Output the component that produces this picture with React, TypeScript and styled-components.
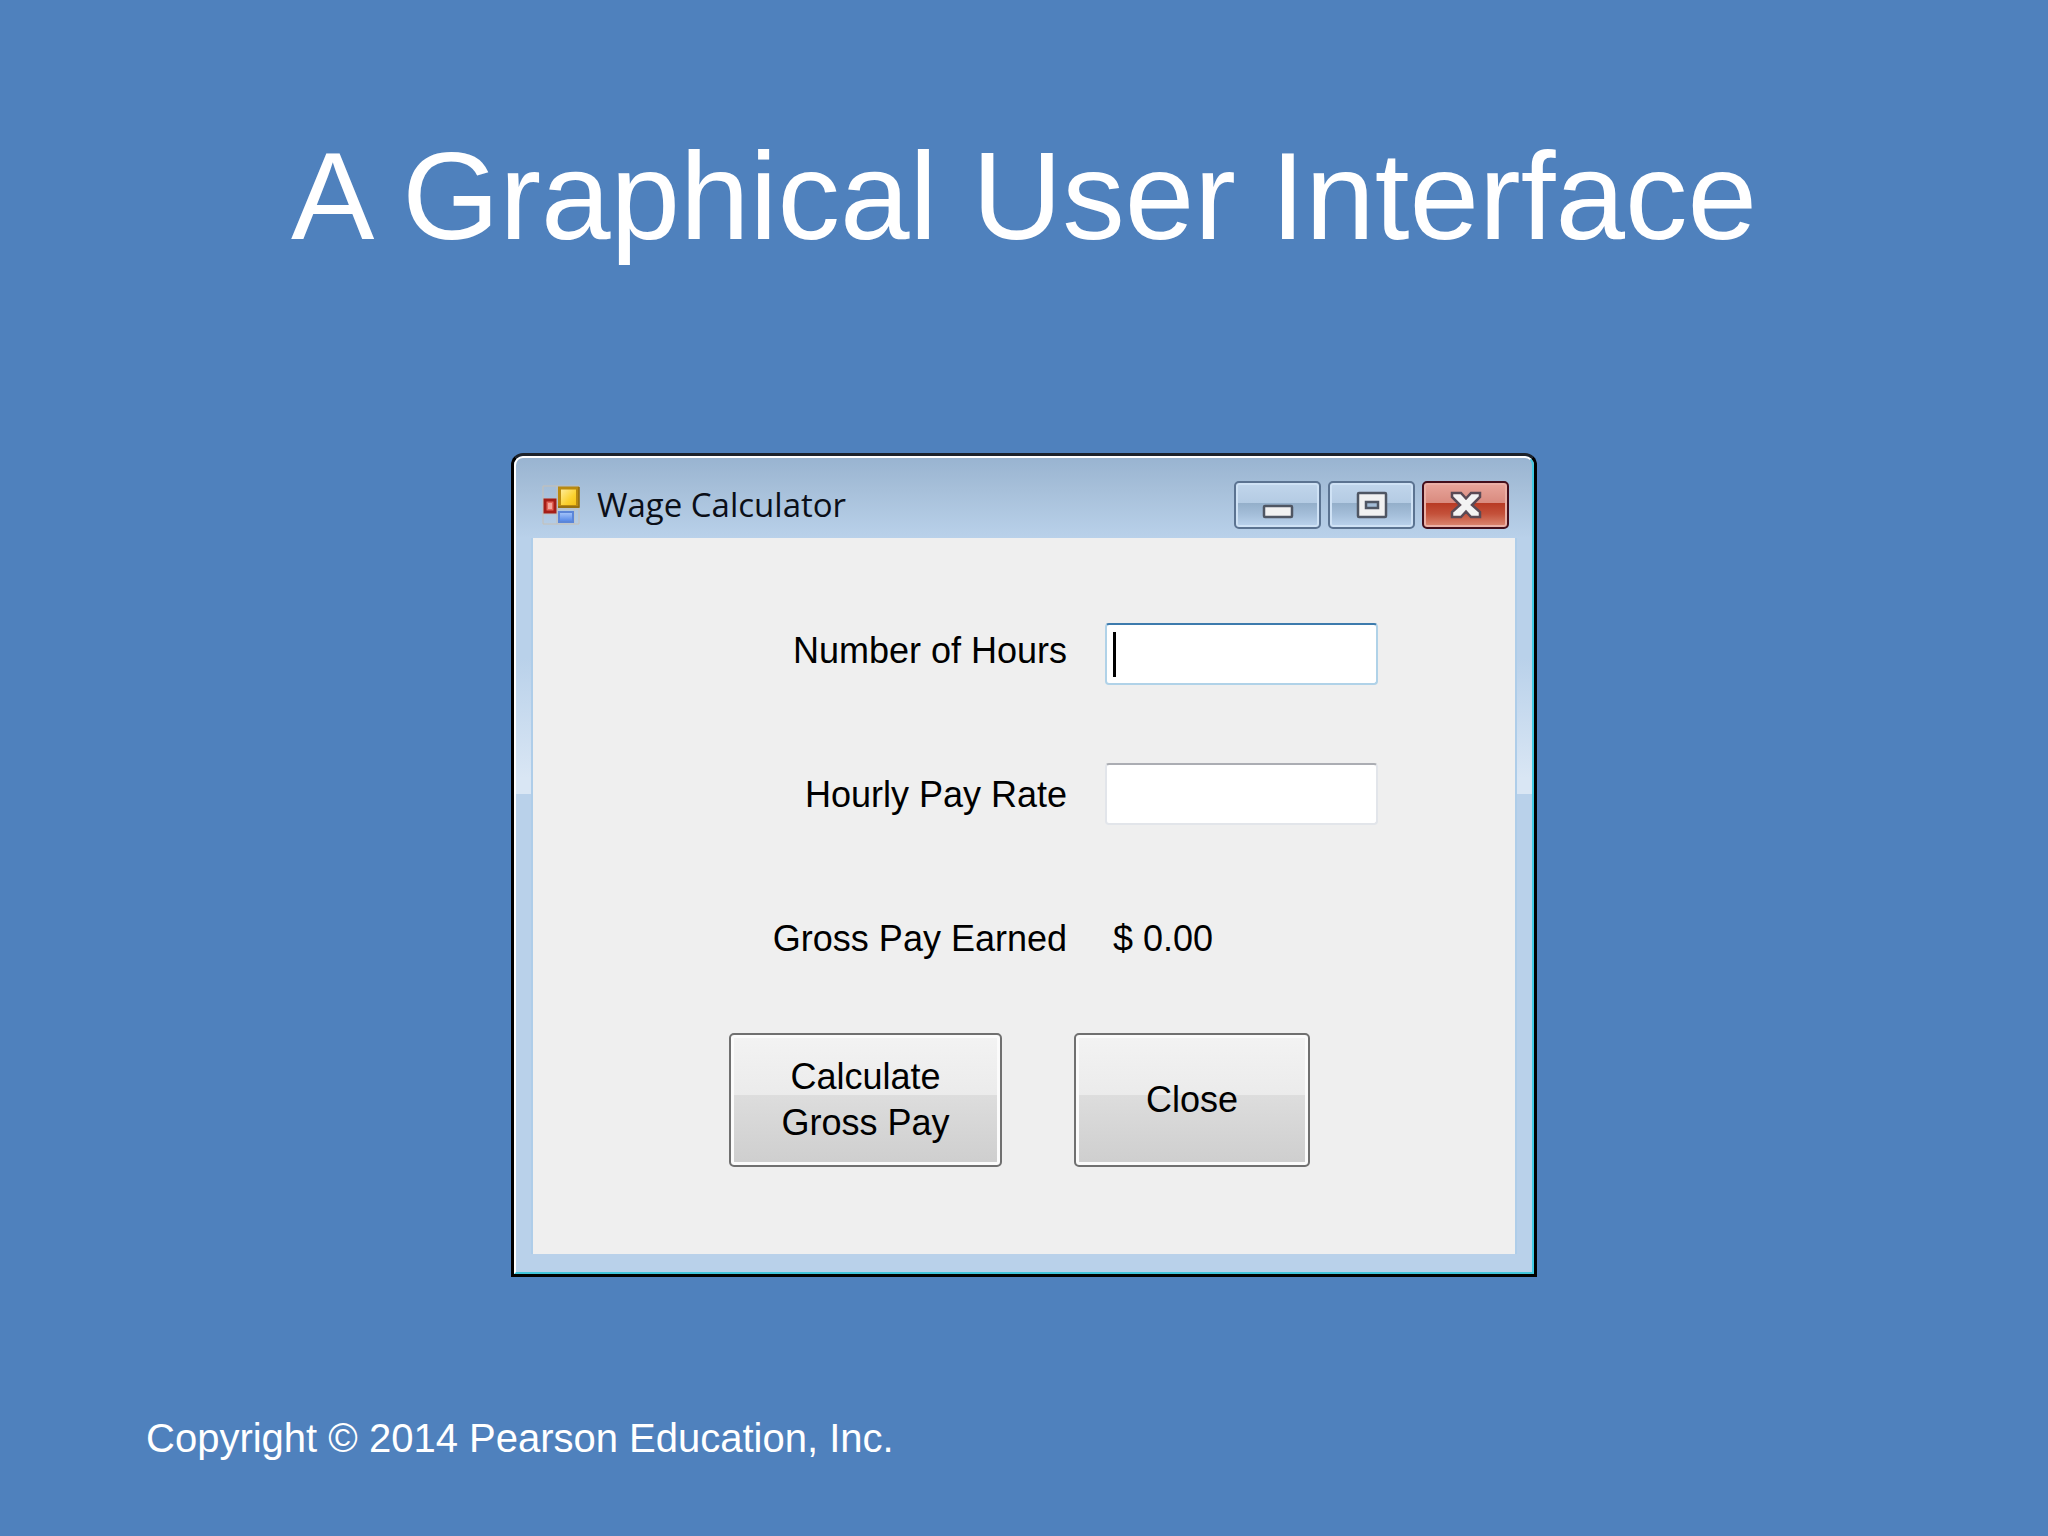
import React from "react";
import styled, { createGlobalStyle } from "styled-components";

const GlobalStyle = createGlobalStyle`
  *, *::before, *::after { box-sizing: border-box; }
  body {
    margin: 0;
    background: #4f81bd;
    font-family: "Liberation Sans", Arial, sans-serif;
  }
`;

const Slide = styled.main`
  min-height: 100vh;
  display: flex;
  flex-direction: column;
  align-items: center;
  padding: 120px 146px 73px;
  color: #fff;
`;

const SlideTitle = styled.h1`
  margin: 0;
  font-size: 125px;
  line-height: 152px;
  font-weight: 400;
  text-align: center;
`;

const Copyright = styled.footer`
  align-self: flex-start;
  margin-top: auto;
  font-size: 40px;
  line-height: 50px;
`;

const Window = styled.section`
  width: 1026px;
  max-width: 100%;
  margin-top: 181px;
  display: flex;
  flex-direction: column;
  border: 3px solid #000;
  border-top-color: #1c222b;
  border-radius: 12px 12px 0 0;
  overflow: hidden;
  background: #b9d1ea;
`;

const Frame = styled.div`
  display: flex;
  flex-direction: column;
  border: 2px solid #fff;
  border-right-color: #41cbe4;
  border-bottom-color: #41c6dc;
  border-radius: 9px 9px 0 0;
  padding: 0 17px 18px;
  background:
    linear-gradient(#99b4d1 0, #a6bfd9 30px, #b9d1ea 80px, #b9d1ea 200px, #d9e6f4 320px, #d9e6f4 336px, #b9d1ea 336px);
`;

const TitleBar = styled.header`
  display: flex;
  align-items: center;
  height: 80px;
  padding: 14px 6px 0 9px;
`;

const Caption = styled.h2`
  flex: 1;
  margin: 0 0 0 17px;
  font-family: "Open Sans", "Noto Sans", sans-serif;
  font-size: 33px;
  line-height: 48px;
  font-weight: 400;
  color: #0b0f18;
`;

const WindowButtons = styled.div`
  display: flex;
  gap: 7px;
`;

const WindowButton = styled.button<{ $danger?: boolean }>`
  width: 87px;
  height: 48px;
  padding: 0;
  display: grid;
  place-items: center;
  border: 2px solid ${(p) => (p.$danger ? "#430f1c" : "#5b7391")};
  border-radius: 5px;
  box-shadow: inset 0 0 0 2px ${(p) => (p.$danger ? "#eab0a6" : "#cfe2f5")};
  background: ${(p) =>
    p.$danger
      ? "linear-gradient(#e8a69c 0, #d98a7e 46%, #b83a24 46%, #c4513a 70%, #dc8a74 100%)"
      : "linear-gradient(#c1d6ec 0, #b4cbe3 46%, #94afca 46%, #a3bdd8 70%, #bcd4ee 100%)"};
`;

const Client = styled.form`
  background: #efefef;
  color: #000;
  padding: 85px 0 87px;
  box-shadow: -2px 0 0 #aecde9, 2px 0 0 #aecde9;
  font-size: 36px;
`;

const Fields = styled.div`
  display: flex;
  justify-content: flex-end;
  gap: 38px;
  padding-right: 137px;
`;

const Labels = styled.div`
  display: flex;
  flex-direction: column;
  gap: 96px;
  padding-top: 4px;
  text-align: right;
  line-height: 48px;
`;

const Values = styled.div`
  width: 273px;
  display: flex;
  flex-direction: column;
  gap: 78px;
`;

const InputWrap = styled.div`
  position: relative;
  display: flex;
`;

const TextInput = styled.input<{ $active?: boolean }>`
  width: 100%;
  height: 62px;
  padding: 0 10px;
  border: 2px solid ${(p) => (p.$active ? "#b0d2e8" : "#e2e5ea")};
  border-top-color: ${(p) => (p.$active ? "#3d7bad" : "#abadb3")};
  border-radius: 4px;
  outline: 0;
  background: #fff;
  font: inherit;
`;

const Caret = styled.span`
  position: absolute;
  left: 8px;
  top: 9px;
  width: 3px;
  height: 45px;
  background: #000;
`;

const Output = styled.output`
  padding-left: 8px;
  line-height: 72px;
`;

const Actions = styled.div`
  display: flex;
  justify-content: flex-end;
  gap: 72px;
  margin-top: 58px;
  padding-right: 205px;
`;

const PushButton = styled.button<{ $width: number }>`
  width: ${(p) => p.$width}px;
  height: 134px;
  padding: 0 40px;
  border: 2px solid #707070;
  border-radius: 5px;
  box-shadow: inset 0 0 0 3px #fbfbfb;
  background: linear-gradient(#f3f3f3 0, #ebebeb 46%, #dddddd 46%, #cecece 100%);
  font: inherit;
  line-height: 46px;
  color: #000;
`;

const AppIcon = () => (
  <svg width="38" height="40" viewBox="0 0 38 40" aria-hidden="true">
    <defs>
      <linearGradient id="gold" x1="0" y1="0" x2="1" y2="1">
        <stop offset="0" stopColor="#fff0a8" />
        <stop offset="0.6" stopColor="#fbd12e" />
        <stop offset="1" stopColor="#f3bd10" />
      </linearGradient>
      <linearGradient id="sky" x1="0" y1="0" x2="0" y2="1">
        <stop offset="0" stopColor="#a9c8fb" />
        <stop offset="1" stopColor="#4f83e6" />
      </linearGradient>
    </defs>
    <path d="M1 1H37V39H1ZM15 1V39M1 14H15M1 29H15M15 24H37M32 24V39" fill="none" stroke="#c6c0b6" strokeWidth="1" />
    <rect x="17.5" y="3" width="18" height="18.500" fill="url(#gold)" stroke="#b98a10" strokeWidth="3" />
    <path d="M16 22H37V2" fill="none" stroke="#8f6a10" strokeWidth="1.500" />
    <rect x="3" y="15" width="10" height="12" fill="#e4665a" stroke="#a51d16" strokeWidth="3" />
    <rect x="6" y="18" width="4" height="6" fill="#f4a59a" />
    <rect x="17" y="27" width="14" height="10" fill="url(#sky)" stroke="#5c86d8" strokeWidth="2" />
  </svg>
);

const MinimizeIcon = () => (
  <svg width="32" height="30" viewBox="0 0 32 30" aria-hidden="true">
    <rect x="2" y="16" width="28" height="11" rx="1" fill="#f1f1f1" stroke="#4f5663" strokeWidth="2.500" />
  </svg>
);

const MaximizeIcon = () => (
  <svg width="32" height="30" viewBox="0 0 32 30" aria-hidden="true">
    <rect x="2" y="3" width="28" height="24" rx="1" fill="#f1f1f1" stroke="#4f5663" strokeWidth="2.500" />
    <rect x="10" y="12" width="12" height="6" fill="#a3bcd6" stroke="#4f5663" strokeWidth="2.500" />
  </svg>
);

const CloseIcon = () => (
  <svg width="32" height="30" viewBox="0 0 32 30" aria-hidden="true">
    <path
      d="M2 3H11L16 8.500L21 3H30V7L22 15L30 22V27H21L16 21.500L11 27H2V22L10 15L2 7Z"
      fill="#f3f3f3"
      stroke="#5a4a55"
      strokeWidth="2.500"
    />
  </svg>
);

export default function App() {
  return (
    <>
      <GlobalStyle />
      <Slide>
        <SlideTitle>A Graphical User Interface</SlideTitle>
        <Window aria-labelledby="caption">
          <Frame>
            <TitleBar>
              <AppIcon />
              <Caption id="caption">Wage Calculator</Caption>
              <WindowButtons>
                <WindowButton type="button" aria-label="Minimize">
                  <MinimizeIcon />
                </WindowButton>
                <WindowButton type="button" aria-label="Maximize">
                  <MaximizeIcon />
                </WindowButton>
                <WindowButton type="button" aria-label="Close window" $danger>
                  <CloseIcon />
                </WindowButton>
              </WindowButtons>
            </TitleBar>
            <Client onSubmit={(e) => e.preventDefault()}>
              <Fields>
                <Labels>
                  <label htmlFor="hours">Number of Hours</label>
                  <label htmlFor="rate">Hourly Pay Rate</label>
                  <label htmlFor="gross">Gross Pay Earned</label>
                </Labels>
                <Values>
                  <InputWrap>
                    <TextInput id="hours" type="text" $active />
                    <Caret />
                  </InputWrap>
                  <InputWrap>
                    <TextInput id="rate" type="text" />
                  </InputWrap>
                  <Output id="gross">$ 0.00</Output>
                </Values>
              </Fields>
              <Actions>
                <PushButton type="submit" $width={273}>
                  Calculate Gross Pay
                </PushButton>
                <PushButton type="button" $width={236}>
                  Close
                </PushButton>
              </Actions>
            </Client>
          </Frame>
        </Window>
        <Copyright>Copyright © 2014 Pearson Education, Inc.</Copyright>
      </Slide>
    </>
  );
}
